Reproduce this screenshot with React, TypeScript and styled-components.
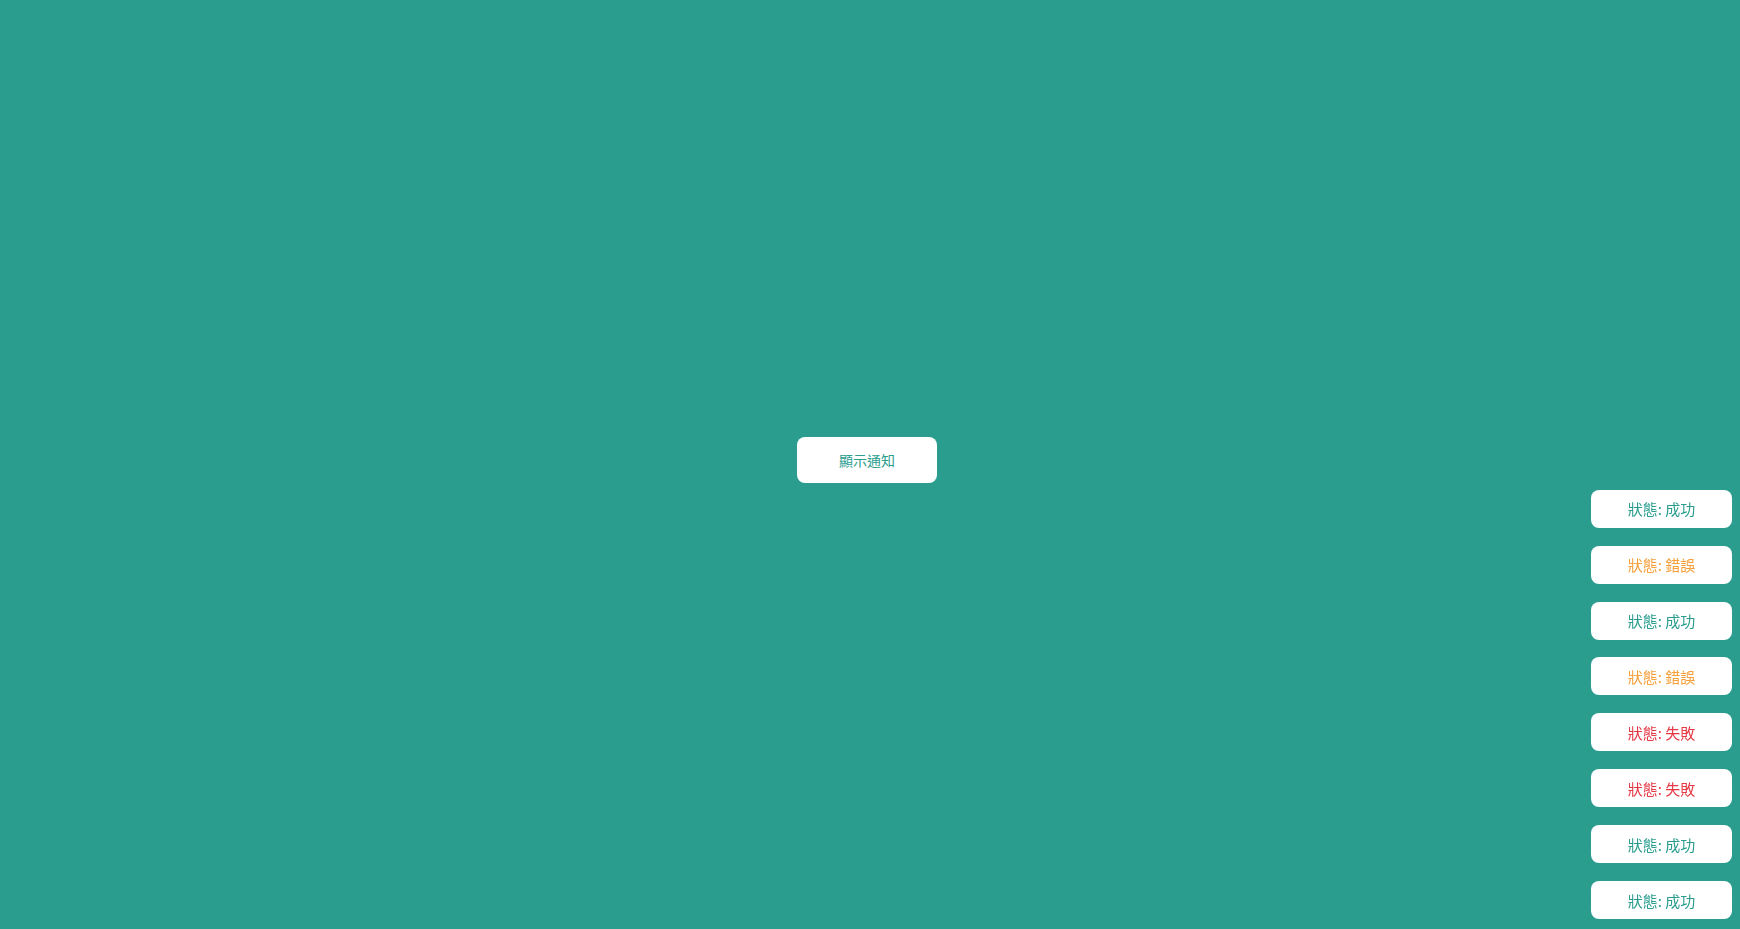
import React from "react";
import styled, { createGlobalStyle } from "styled-components";

const Global = createGlobalStyle`
  html, body { margin: 0; padding: 0; }
  body {
    background: #2a9d8f;
    font-family: "Noto Sans CJK TC", "Noto Sans", sans-serif;
  }
`;

const Stage = styled.main`
  height: 100vh;
  box-sizing: border-box;
  display: flex;
  align-items: center;
  justify-content: center;
  padding: 0 6px 9px 0;
`;

const ShowButton = styled.button`
  width: 140px;
  height: 46px;
  border: none;
  border-radius: 8px;
  background: #ffffff;
  color: #2a9d8f;
  font-family: inherit;
  font-size: 14px;
  cursor: pointer;
`;

const Stack = styled.div`
  position: fixed;
  right: 8px;
  bottom: 10px;
  display: flex;
  flex-direction: column;
  gap: 17.9px;
`;

type Kind = "success" | "error" | "fail";

const colors: Record<Kind, string> = {
  success: "#2a9d8f",
  error: "#f5a03a",
  fail: "#e63946",
};

const Toast = styled.div<{ $kind: Kind }>`
  width: 141px;
  height: 38px;
  box-sizing: border-box;
  border-radius: 8px;
  background: #ffffff;
  color: ${(p) => colors[p.$kind]};
  font-size: 15px;
  display: flex;
  align-items: center;
  justify-content: center;
`;

const labels: Record<Kind, string> = {
  success: "成功",
  error: "錯誤",
  fail: "失敗",
};

const items: Kind[] = ["success", "error", "success", "error", "fail", "fail", "success", "success"];

export default function App() {
  return (
    <>
      <Global />
      <Stage>
        <ShowButton>顯示通知</ShowButton>
      </Stage>
      <Stack>
        {items.map((k, i) => (
          <Toast key={i} $kind={k}>
            狀態: {labels[k]}
          </Toast>
        ))}
      </Stack>
    </>
  );
}
